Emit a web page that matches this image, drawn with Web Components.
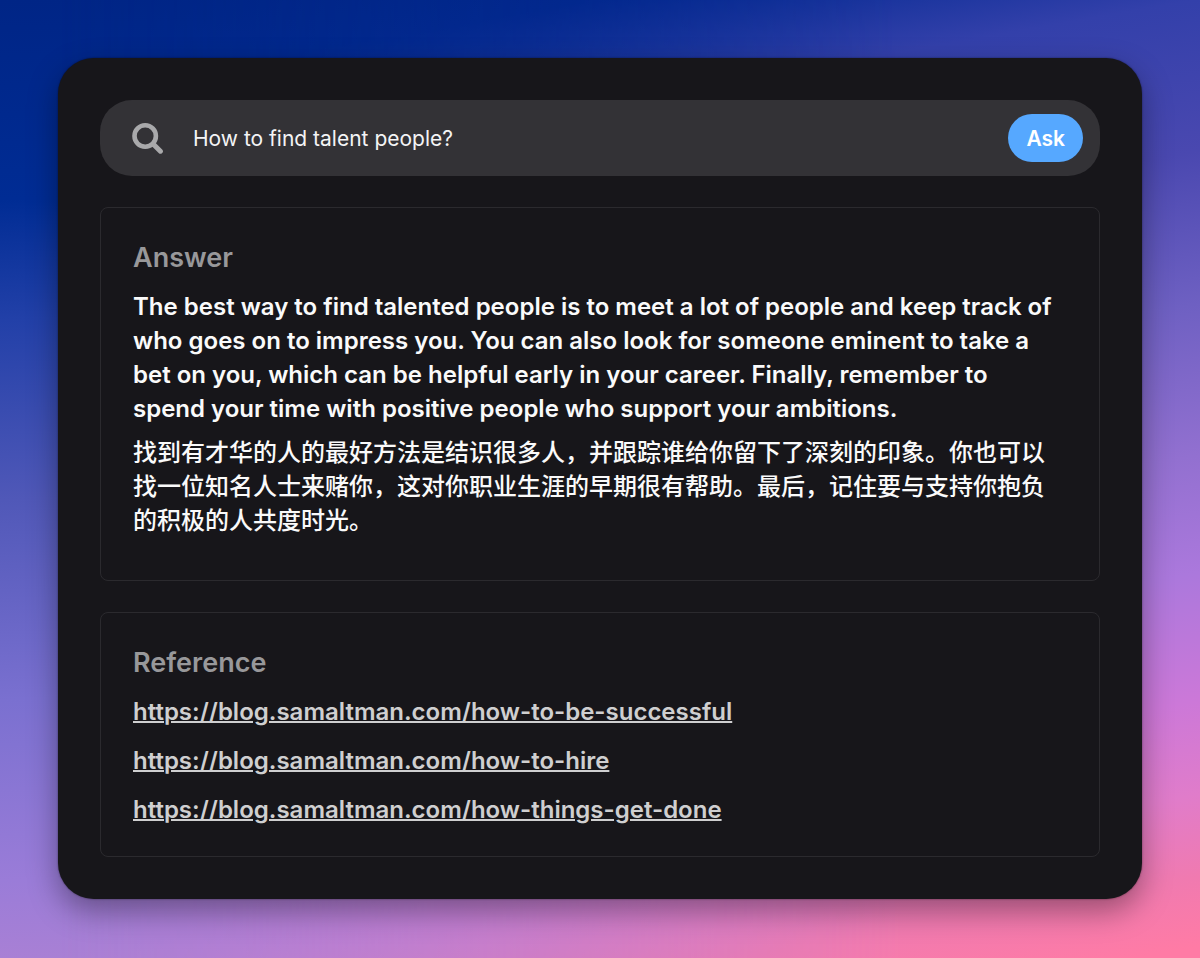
<!DOCTYPE html>
<html lang="en">
<head>
<meta charset="utf-8">
<title>Ask</title>
<style>
  body { margin: 0; font-family: Inter, "Noto Sans CJK SC", sans-serif; }
</style>
</head>
<body>
<ask-backdrop>
  <ask-card>
    <ask-search value="How to find talent people?"></ask-search>
    <ask-panel heading="Answer">
      <ask-answer>
        <p>The best way to find talented people is to meet a lot of people and keep track of who goes on to impress you. You can also look for someone eminent to take a bet on you, which can be helpful early in your career. Finally, remember to spend your time with positive people who support your ambitions.</p>
        <p lang="zh-CN">找到有才华的人的最好方法是结识很多人，并跟踪谁给你留下了深刻的印象。你也可以找一位知名人士来赌你，这对你职业生涯的早期很有帮助。最后，记住要与支持你抱负的积极的人共度时光。</p>
      </ask-answer>
    </ask-panel>
    <ask-panel heading="Reference">
      <ask-links>
        <ask-link href="https://blog.samaltman.com/how-to-be-successful"></ask-link>
        <ask-link href="https://blog.samaltman.com/how-to-hire"></ask-link>
        <ask-link href="https://blog.samaltman.com/how-things-get-done"></ask-link>
      </ask-links>
    </ask-panel>
  </ask-card>
</ask-backdrop>

<script>
  class AskElement extends HTMLElement {
    constructor() {
      super();
      this.attachShadow({ mode: "open" }).innerHTML = this.constructor.markup;
    }
  }

  class AskBackdrop extends AskElement {
    static markup = `
      <style>
        :host {
          display: block; position: relative; isolation: isolate; box-sizing: border-box;
          min-height: 100vh; padding: 58px; overflow: hidden;
          background: linear-gradient(178deg, #002586 0%, #002c94 20%, #2240a8 32%, #5058b8 50%, #7a70d0 70%, #9a7cd8 88%, #b082d3 100%);
        }
        :host::before {
          content: ""; position: absolute; inset: 0; z-index: -1;
          background: linear-gradient(170deg, #002788 0%, #042a92 9%, #3340aa 18%, #4a48b0 31%, #6e60c2 44%, #9270d0 57%, #ab78dc 67%, #cc78d8 78%, #e07cca 86%, #f07ab0 93%, #ff7ba5 99%);
          -webkit-mask-image: linear-gradient(90deg, transparent 5%, #000 75%);
          mask-image: linear-gradient(90deg, transparent 5%, #000 75%);
        }
      </style>
      <slot></slot>`;
  }

  class AskCard extends AskElement {
    static markup = `
      <style>
        :host {
          display: flex; flex-direction: column; gap: 31px;
          padding: 42px; border-radius: 36px; background: #17161a;
          box-shadow: 0 12px 30px rgba(0, 0, 0, .36), 0 0 2px rgba(0, 0, 0, .5);
        }
      </style>
      <slot></slot>`;
  }

  class AskSearch extends AskElement {
    static markup = `
      <style>
        :host { display: block; }
        form {
          display: flex; align-items: center; box-sizing: border-box; height: 76px;
          padding: 0 17px 0 32px; border-radius: 32px; background: #333236;
        }
        svg { flex: none; width: 32px; height: 32px; margin-right: 29px; }
        input {
          flex: 1; min-width: 0; padding: 2px 0 0; border: 0; outline: 0; background: none;
          color: #f4f4f5; font: 400 21px/32px Inter, sans-serif;
        }
        button {
          flex: none; height: 48px; padding: 2px 18px 0; border: 0; border-radius: 24px;
          background: #56a8ff; color: #fff; font: 600 21px/32px Inter, sans-serif; cursor: pointer;
        }
      </style>
      <form>
        <svg viewBox="0 0 32 32" fill="none" stroke="#a9a9ab" stroke-linecap="round" aria-hidden="true">
          <circle cx="13.2" cy="14" r="10.7" stroke-width="4.6"/>
          <path d="M21.4 22.2L28.4 29.2" stroke-width="5"/>
        </svg>
        <input type="text" aria-label="Question">
        <button type="submit">Ask</button>
      </form>`;
    connectedCallback() {
      this.shadowRoot.querySelector("input").value = this.getAttribute("value") || "";
      this.shadowRoot.querySelector("form").addEventListener("submit", (e) => e.preventDefault());
    }
  }

  class AskPanel extends AskElement {
    static markup = `
      <style>
        :host { display: block; padding: 33px 32px 29px; border: 1px solid #2b2a2e; border-radius: 8px; }
        h2 { margin: 0 0 15px; color: #98989a; font-size: 27px; line-height: 34px; font-weight: 600; }
      </style>
      <section><h2></h2><slot></slot></section>`;
    connectedCallback() {
      this.shadowRoot.querySelector("h2").textContent = this.getAttribute("heading");
    }
  }

  class AskAnswer extends AskElement {
    static markup = `
      <style>
        :host { display: flex; flex-direction: column; gap: 10px; padding: 0 8px 13px 0; }
        ::slotted(p) { margin: 0; color: #fafafa; font-size: 24px; line-height: 34px; font-weight: 600; }
        ::slotted(p:lang(zh)) { font-weight: 500; }
      </style>
      <slot></slot>`;
  }

  class AskLinks extends AskElement {
    static markup = `
      <style>
        :host { display: flex; flex-direction: column; align-items: flex-start; gap: 15px; }
      </style>
      <slot></slot>`;
  }

  class AskLink extends AskElement {
    static markup = `
      <style>
        :host { display: block; }
        a {
          display: block; color: #cfcfd0; font-size: 24px; line-height: 34px; font-weight: 600;
          text-decoration: underline; text-decoration-thickness: 2px;
        }
      </style>
      <a></a>`;
    connectedCallback() {
      const a = this.shadowRoot.querySelector("a");
      a.href = a.textContent = this.getAttribute("href");
    }
  }

  customElements.define("ask-backdrop", AskBackdrop);
  customElements.define("ask-card", AskCard);
  customElements.define("ask-search", AskSearch);
  customElements.define("ask-panel", AskPanel);
  customElements.define("ask-answer", AskAnswer);
  customElements.define("ask-links", AskLinks);
  customElements.define("ask-link", AskLink);
</script>
</body>
</html>
